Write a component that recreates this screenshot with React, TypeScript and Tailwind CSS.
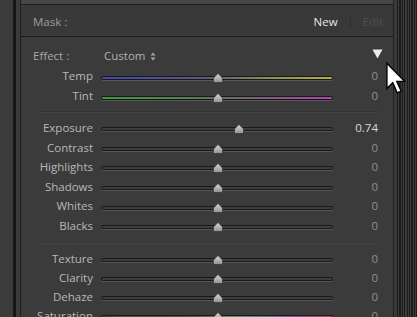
import React from 'react';

type Row = { label: string; value: string; pos: number; track?: string };

const TRACK_GRAY = 'bg-[#3e3e3e]';
const TRACK_TEMP = 'bg-[linear-gradient(90deg,#4444b0,#5a5a80_45%,#8a8a60_70%,#b0b040)]';
const TRACK_TINT = 'bg-[linear-gradient(90deg,#3c9a3c,#5a7a5a_45%,#806080_70%,#b040b0)]';
const TRACK_SAT = 'bg-[linear-gradient(90deg,#4a4a4a,#5a5a5a_40%,#5a9a5a_55%,#4a80b0_72%,#8050b0_86%,#c04060)]';

const tempRows: Row[] = [
  { label: 'Temp', value: '0', pos: 117, track: TRACK_TEMP },
  { label: 'Tint', value: '0', pos: 117, track: TRACK_TINT },
];

const toneRows: Row[] = [
  { label: 'Exposure', value: '0.74', pos: 138 },
  { label: 'Contrast', value: '0', pos: 117 },
  { label: 'Highlights', value: '0', pos: 117 },
  { label: 'Shadows', value: '0', pos: 117 },
  { label: 'Whites', value: '0', pos: 117 },
  { label: 'Blacks', value: '0', pos: 117 },
];

const presenceRows: Row[] = [
  { label: 'Texture', value: '0', pos: 117 },
  { label: 'Clarity', value: '0', pos: 117 },
  { label: 'Dehaze', value: '0', pos: 117 },
  { label: 'Saturation', value: '0', pos: 117, track: TRACK_SAT },
];

function Thumb({ pos }: { pos: number }) {
  return (
    <svg
      className="absolute bottom-[-3px]"
      style={{ left: pos - 5 }}
      width="10"
      height="10"
      viewBox="0 0 10 10"
    >
      <defs>
        <linearGradient id="thumbFill" x1="0" y1="0" x2="0" y2="1">
          <stop offset="0" stopColor="#dadada" />
          <stop offset="1" stopColor="#909090" />
        </linearGradient>
      </defs>
      <path d="M5 0.5 L9.5 5 L9.5 9.5 L0.5 9.5 L0.5 5 Z" fill="url(#thumbFill)" stroke="#2a2a2a" strokeWidth="0.6" />
    </svg>
  );
}

function SliderRow({ row, height }: { row: Row; height: string }) {
  const bright = row.value !== '0';
  return (
    <div className={`flex shrink-0 items-center ${height}`}>
      <div className="w-[72px] text-right text-[#b8b8b8] leading-none">{row.label}</div>
      <div className="ml-[8px] w-[232px] flex items-center h-full">
        <div className="relative w-full mt-[3px]">
          <div className="h-[4px] w-full rounded-full bg-[#191919] shadow-[0_1px_0_#565656] px-[1px] pt-[1px]">
            <div className={`h-[2px] w-full rounded-full ${row.track ?? TRACK_GRAY}`} />
          </div>
          <Thumb pos={row.pos} />
        </div>
      </div>
      <div className={`w-[45px] text-right leading-none ${bright ? 'text-[#dadada]' : 'text-[#8e8e8e]'}`}>
        {row.value}
      </div>
    </div>
  );
}

function Separator({ className }: { className: string }) {
  return <div className={`shrink-0 ml-[19px] mr-[15px] h-px bg-[#323232] shadow-[0_1px_0_#444] ${className}`} />;
}

export default function App() {
  return (
    <div
      className="relative flex w-[417px] h-[317px] overflow-hidden bg-[#3b3b3b] text-[11.5px]"
      style={{ fontFamily: '"Open Sans", "Noto Sans", sans-serif' }}
    >
      {/* left gutter */}
      <div className="w-[13px] bg-[#3b3b3b]" />
      <div className="w-[3px] bg-[#161616]" />
      <div className="w-[4px] bg-[#3b3b3b]" />

      {/* main panel */}
      <div className="w-[374px] flex flex-col border-l border-r border-[#1f1f1f] overflow-hidden">
        <div className="shrink-0 h-[4px] bg-[#474747]" />
        <div className="shrink-0 h-[33px] flex items-center border-t border-b border-[#1c1c1c] bg-[#393939] pt-[2px] pl-[12px] pr-[10px]">
          <span className="text-[#9c9c9c]">Mask :</span>
          <span className="ml-auto text-[#e8e8e8]">New</span>
          <span className="mx-[12px] w-px h-[13px] bg-[#2e2e2e]" />
          <span className="text-[#4e4e4e]">Edit</span>
        </div>

        <div className="flex flex-col bg-[#3b3b3b] shrink-0">
          <div className="shrink-0 mt-[9px] h-[20px] flex items-center pl-[12px] pr-[10px]">
            <span className="w-[71px] text-[#a8a8a8]">Effect :</span>
            <span className="text-[#b0b0b0]">Custom</span>
            <svg className="ml-[5px]" width="6" height="9" viewBox="0 0 6 9">
              <path d="M3 0.5 L5.5 3.5 L0.5 3.5 Z" fill="#a8a8a8" />
              <path d="M3 8.5 L5.5 5.5 L0.5 5.5 Z" fill="#a8a8a8" />
            </svg>
            <svg className="ml-auto mb-[5px]" width="11" height="10" viewBox="0 0 11 10">
              <path d="M0.5 0.5 L10.5 0.5 L5.5 9.5 Z" fill="#ececec" />
            </svg>
          </div>

          {tempRows.map((r) => (
            <SliderRow key={r.label} row={r} height="h-[20px]" />
          ))}

          <Separator className="mt-[5px]" />

          <div className="shrink-0 mt-[6px] flex flex-col">
            {toneRows.map((r) => (
              <SliderRow key={r.label} row={r} height="h-[19.6px]" />
            ))}
          </div>

          <Separator className="mt-[6px]" />

          <div className="shrink-0 mt-[6.5px] flex flex-col">
            {presenceRows.map((r) => (
              <SliderRow key={r.label} row={r} height="h-[19px]" />
            ))}
          </div>
        </div>
      </div>

      {/* right edge */}
      <div className="w-[3px] bg-[#3a3a3a]" />
      <div className="w-[20px] bg-[repeating-linear-gradient(90deg,#1c1c1c_0_1.2px,#3c3c3c_1.2px_2.4px)]" />

      {/* mouse pointer */}
      <svg className="absolute left-[386px] top-[62px]" width="20" height="33" viewBox="0 0 13 21">
        <path
          d="M0.6 0.6 L0.6 17 L4.4 13.3 L7.3 19.8 L9.9 18.7 L7 12.4 L12.2 12.4 Z"
          fill="#ffffff"
          stroke="#000000"
          strokeWidth="0.9"
          strokeLinejoin="miter"
        />
      </svg>
    </div>
  );
}
